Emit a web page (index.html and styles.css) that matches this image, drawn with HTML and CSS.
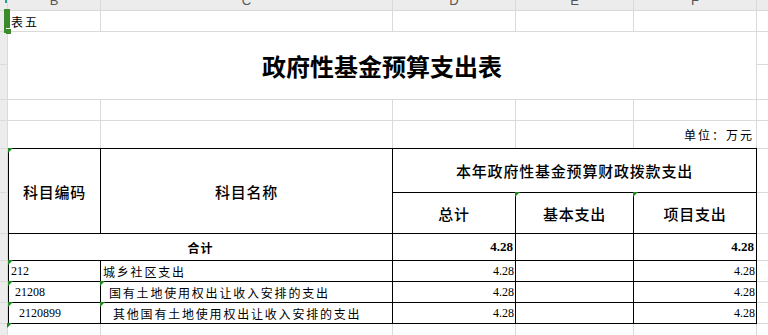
FILE: index.html
```html
<!DOCTYPE html>
<html lang="zh-CN">
<head>
<meta charset="utf-8">
<title>政府性基金预算支出表</title>
<link rel="stylesheet" href="styles.css">
</head>
<body>
<div class="sheet">
  <div class="grid">
    <div class="ch corner"></div>
    <div class="ch"><span>B</span></div>
    <div class="ch"><span>C</span></div>
    <div class="ch"><span>D</span></div>
    <div class="ch"><span>E</span></div>
    <div class="ch"><span>F</span></div>
    <div class="ch"></div>

    <div class="rh"></div>
    <div class="c note">表五</div>
    <div class="c"></div>
    <div class="c"></div>
    <div class="c"></div>
    <div class="c"></div>
    <div class="c"></div>

    <div class="rh"></div>
    <div class="c title">政府性基金预算支出表</div>
    <div class="c"></div>

    <div class="rh"></div>
    <div class="c"></div>

    <div class="rh"></div>
    <div class="c"></div>
    <div class="c"></div>
    <div class="c"></div>
    <div class="c"></div>
    <div class="c"></div>
    <div class="c"></div>

    <div class="rh"></div>
    <div class="c"></div>
    <div class="c"></div>
    <div class="c"></div>
    <div class="c"></div>
    <div class="c unit">单位：万元</div>
    <div class="c"></div>

    <div class="rh"></div>
    <div class="tbl">
      <div class="tc hd rspan mark">科目编码</div>
      <div class="tc hd rspan">科目名称</div>
      <div class="tc hd cspan3">本年政府性基金预算财政拨款支出</div>
      <div class="tc hd">总计</div>
      <div class="tc hd mark">基本支出</div>
      <div class="tc hd mark">项目支出</div>

      <div class="tc total cspan2">合计</div>
      <div class="tc num b">4.28</div>
      <div class="tc"></div>
      <div class="tc num b">4.28</div>

      <div class="tc code mark">212</div>
      <div class="tc name">城乡社区支出</div>
      <div class="tc num">4.28</div>
      <div class="tc"></div>
      <div class="tc num">4.28</div>

      <div class="tc code i1 mark">21208</div>
      <div class="tc name n1 mark">国有土地使用权出让收入安排的支出</div>
      <div class="tc num">4.28</div>
      <div class="tc"></div>
      <div class="tc num">4.28</div>

      <div class="tc code i2 mark">2120899</div>
      <div class="tc name n2 mark">其他国有土地使用权出让收入安排的支出</div>
      <div class="tc num">4.28</div>
      <div class="tc"></div>
      <div class="tc num">4.28</div>
    </div>
    <div class="c"></div>

    <div class="rh"></div>
    <div class="c"></div>
    <div class="rh"></div>
    <div class="c"></div>
    <div class="rh"></div>
    <div class="c"></div>
    <div class="rh"></div>
    <div class="c"></div>
    <div class="rh"></div>
    <div class="c"></div>

    <div class="rh"></div>
    <div class="c mark"></div>
    <div class="c"></div>
    <div class="c"></div>
    <div class="c"></div>
    <div class="c"></div>
    <div class="c"></div>
  </div>
  <div class="sel"></div>
</div>
</body>
</html>
```

FILE: styles.css
```css
* {
  box-sizing: border-box;
  margin: 0;
  padding: 0;
}

html,
body {
  width: 768px;
  height: 335px;
  overflow: hidden;
  background: #fff;
}

.sheet {
  position: relative;
  width: 768px;
  height: 335px;
  overflow: hidden;
}

.grid {
  display: grid;
  grid-template-columns: 7px 92px 291px 122px 117px 122px 1fr;
  grid-template-rows: 10px 20px 32px 34px 20px 27px 43px 40px 26px 20px 20px 20px 1fr;
  gap: 1px;
  height: 335px;
  background: #dadada;
}

.ch {
  background: #ececec;
  overflow: hidden;
  text-align: center;
  font: 13px/14px "Liberation Sans", Arial, sans-serif;
  color: #555;
}

.ch span {
  display: block;
  margin-top: -6px;
}

.corner {
  position: relative;
  overflow: visible;
}

.corner::after {
  content: "";
  position: absolute;
  left: 5px;
  top: 0;
  width: 2px;
  height: 3px;
  background: #2a9d96;
}

.rh {
  background: #ececec;
}

.c {
  position: relative;
  display: flex;
  align-items: center;
  background: #fff;
  font-family: "Noto Sans CJK SC", sans-serif;
  font-size: 12px;
  color: #000;
}

.note {
  padding-left: 3px;
  letter-spacing: 2px;
}

.title {
  grid-column: span 5;
  grid-row: span 2;
  justify-content: center;
  font-size: 24px;
  font-weight: 700;
}

.unit {
  justify-content: flex-end;
  padding-right: 2px;
  letter-spacing: 2px;
}

.tbl {
  grid-column: span 5;
  grid-row: span 6;
  margin: -1px -1px -1px 0;
  display: grid;
  grid-template-columns: 91px 291px 122px 117px 122px;
  grid-template-rows: 43px 40px 26px 20px 20px 20px;
  gap: 1px;
  background: #000;
  border: 1px solid #000;
}

.tc {
  position: relative;
  display: flex;
  align-items: center;
  background: #fff;
  font-family: "Noto Sans CJK SC", sans-serif;
  font-size: 12px;
  color: #000;
  white-space: nowrap;
}

.hd {
  justify-content: center;
  font-size: 15px;
  font-weight: 500;
  letter-spacing: 0.8px;
}

.rspan {
  grid-row: span 2;
}

.cspan3 {
  grid-column: span 3;
}

.cspan2 {
  grid-column: span 2;
}

.total {
  justify-content: center;
  font-weight: 700;
  letter-spacing: 1px;
}

.num {
  justify-content: flex-end;
  padding-right: 1px;
  padding-top: 1px;
  font-family: "Liberation Serif", "Times New Roman", serif;
  font-size: 12px;
}

.num.b {
  font-size: 13px;
  font-weight: 700;
  padding-right: 2px;
  padding-top: 0;
}

.code {
  padding-left: 2px;
  padding-top: 1px;
  font-family: "Liberation Serif", "Times New Roman", serif;
}

.i1 {
  padding-left: 6px;
}

.i2 {
  padding-left: 10px;
}

.name {
  padding-left: 2px;
  letter-spacing: 1.8px;
}

.n1 {
  padding-left: 8px;
}

.n2 {
  padding-left: 12px;
}

.mark::before {
  content: "";
  position: absolute;
  left: -1px;
  top: -1px;
  border-top: 5px solid #1f8a1f;
  border-right: 5px solid transparent;
}

.sel {
  position: absolute;
  left: 4px;
  top: 9px;
  width: 6px;
  height: 24px;
  background: #3b8b2c;
}

.sel::after {
  content: "";
  position: absolute;
  left: 2px;
  top: 19px;
  width: 5px;
  height: 5px;
  background: #3b8b2c;
  border-top: 1px solid #fff;
}
```
